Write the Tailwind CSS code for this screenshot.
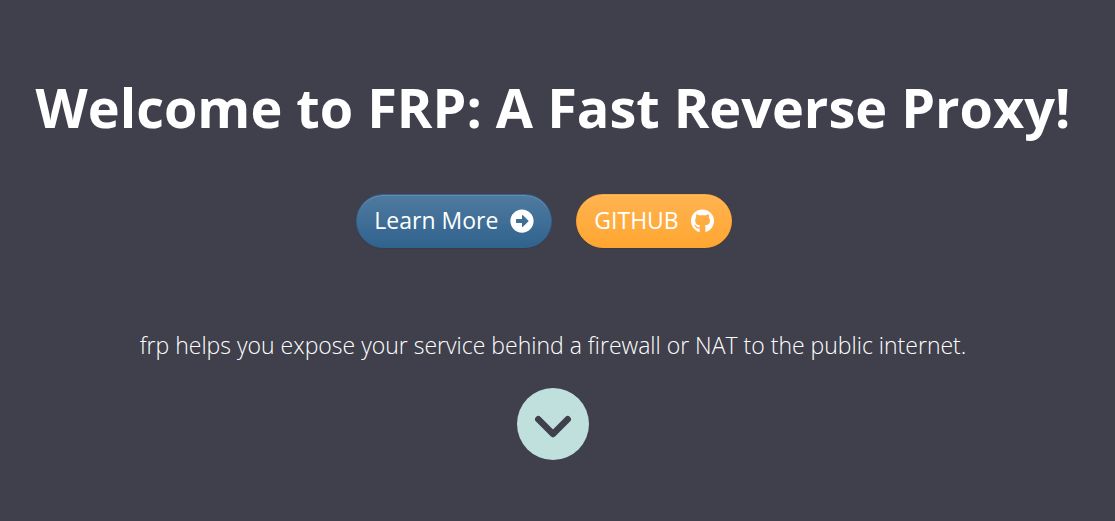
<!DOCTYPE html>
<html lang="en">
<head>
<meta charset="utf-8">
<meta name="viewport" content="width=device-width, initial-scale=1">
<title>FRP</title>
<script src="https://cdn.jsdelivr.net/npm/@tailwindcss/browser@4"></script>
</head>
<body class="min-h-screen bg-[#403f4c] font-['Open_Sans',sans-serif] text-white">
<main class="flex flex-col items-center pt-[71px] pr-[9px] text-center">
  <h1 class="text-[54px] leading-[72px] font-bold">Welcome to FRP: A Fast Reverse Proxy!</h1>
  <div class="mt-[51px] mr-[18px] flex gap-6">
    <a href="#about" class="flex items-center gap-3 rounded-full border border-[#30638e] bg-linear-to-b from-[#4f7a9f] to-[#30638e] px-[17px] pt-2 pb-2 text-[23px] shadow-[inset_0_1px_0_#ffffff26,0_1px_1px_#00000013]"><span class="pb-[2px] leading-[34px]">Learn More</span>
      <svg class="size-6" viewBox="0 0 512 512" fill="currentColor" aria-hidden="true"><path d="M256 8c137 0 248 111 248 248S393 504 256 504 8 393 8 256 119 8 256 8zm-116 292h116v70.900c0 10.700 13 16.100 20.500 8.500l114.300-114.900c4.700-4.700 4.700-12.200 0-16.900l-114.300-115c-7.600-7.600-20.500-2.200-20.500 8.500V212H140c-6.600 0-12 5.400-12 12v64c0 6.600 5.400 12 12 12z"/></svg>
    </a>
    <a href="https://github.com/fatedier/frp" class="flex items-center gap-3 rounded-full border border-[#ffa630] bg-linear-to-b from-[#ffb34f] to-[#ffa630] px-[17px] pt-2 pb-2 text-[23px] shadow-[inset_0_1px_0_#ffffff26,0_1px_1px_#00000013]"><span class="pb-[2px] leading-[34px]">GITHUB</span>
      <svg class="h-6 w-[23px]" viewBox="0 0 496 512" fill="currentColor" aria-hidden="true"><path d="M165.900 397.400c0 2-2.300 3.600-5.200 3.600-3.300.3-5.600-1.300-5.600-3.600 0-2 2.300-3.600 5.200-3.600 3-.3 5.600 1.300 5.600 3.600zm-31.100-4.500c-.7 2 1.300 4.300 4.300 4.900 2.600 1 5.600 0 6.200-2s-1.300-4.300-4.300-5.200c-2.600-.7-5.500.3-6.200 2.300zm44.200-1.700c-2.900.7-4.900 2.600-4.600 4.900.3 2 2.900 3.300 5.900 2.600 2.900-.7 4.900-2.600 4.600-4.600-.3-1.900-3-3.200-5.900-2.900zM244.800 8C106.100 8 0 113.300 0 252c0 110.900 69.800 205.800 169.500 239.200 12.800 2.300 17.300-5.600 17.300-12.100 0-6.200-.3-40.400-.3-61.400 0 0-70 15-84.700-29.800 0 0-11.400-29.100-27.800-36.600 0 0-22.900-15.700 1.600-15.400 0 0 24.900 2 38.600 25.800 21.900 38.600 58.600 27.500 72.900 20.900 2.300-16 8.800-27.100 16-33.700-55.900-6.200-112.300-14.300-112.300-110.500 0-27.500 7.600-41.300 23.600-58.900-2.600-6.500-11.100-33.300 2.600-67.900 20.900-6.500 69 27 69 27 20-5.600 41.500-8.500 62.800-8.500s42.800 2.900 62.800 8.500c0 0 48.100-33.600 69-27 13.700 34.700 5.200 61.400 2.600 67.900 16 17.700 25.800 31.500 25.800 58.900 0 96.500-58.900 104.200-114.800 110.500 9.200 7.900 17 22.900 17 46.400 0 33.700-.3 75.400-.3 83.600 0 6.500 4.600 14.400 17.300 12.100C428.200 457.800 496 362.900 496 252 496 113.300 383.500 8 244.800 8z"/></svg>
    </a>
  </div>
  <p class="mt-[79px] text-[23px] leading-9 font-light">frp helps you expose your service behind a firewall or NAT to the public internet.</p>
  <a href="#next" aria-label="Scroll down" class="mt-[25px] flex size-[72px] items-center justify-center rounded-full bg-[#c0e0de] text-[#403f4c]">
    <svg class="h-8 w-10" viewBox="0 0 40 32" fill="none" stroke="currentColor" stroke-width="6.500" stroke-linecap="round" stroke-linejoin="round" aria-hidden="true"><path d="M5.300 11.300L20 26l14.700-14.700"/></svg>
  </a>
</main>
</body>
</html>
